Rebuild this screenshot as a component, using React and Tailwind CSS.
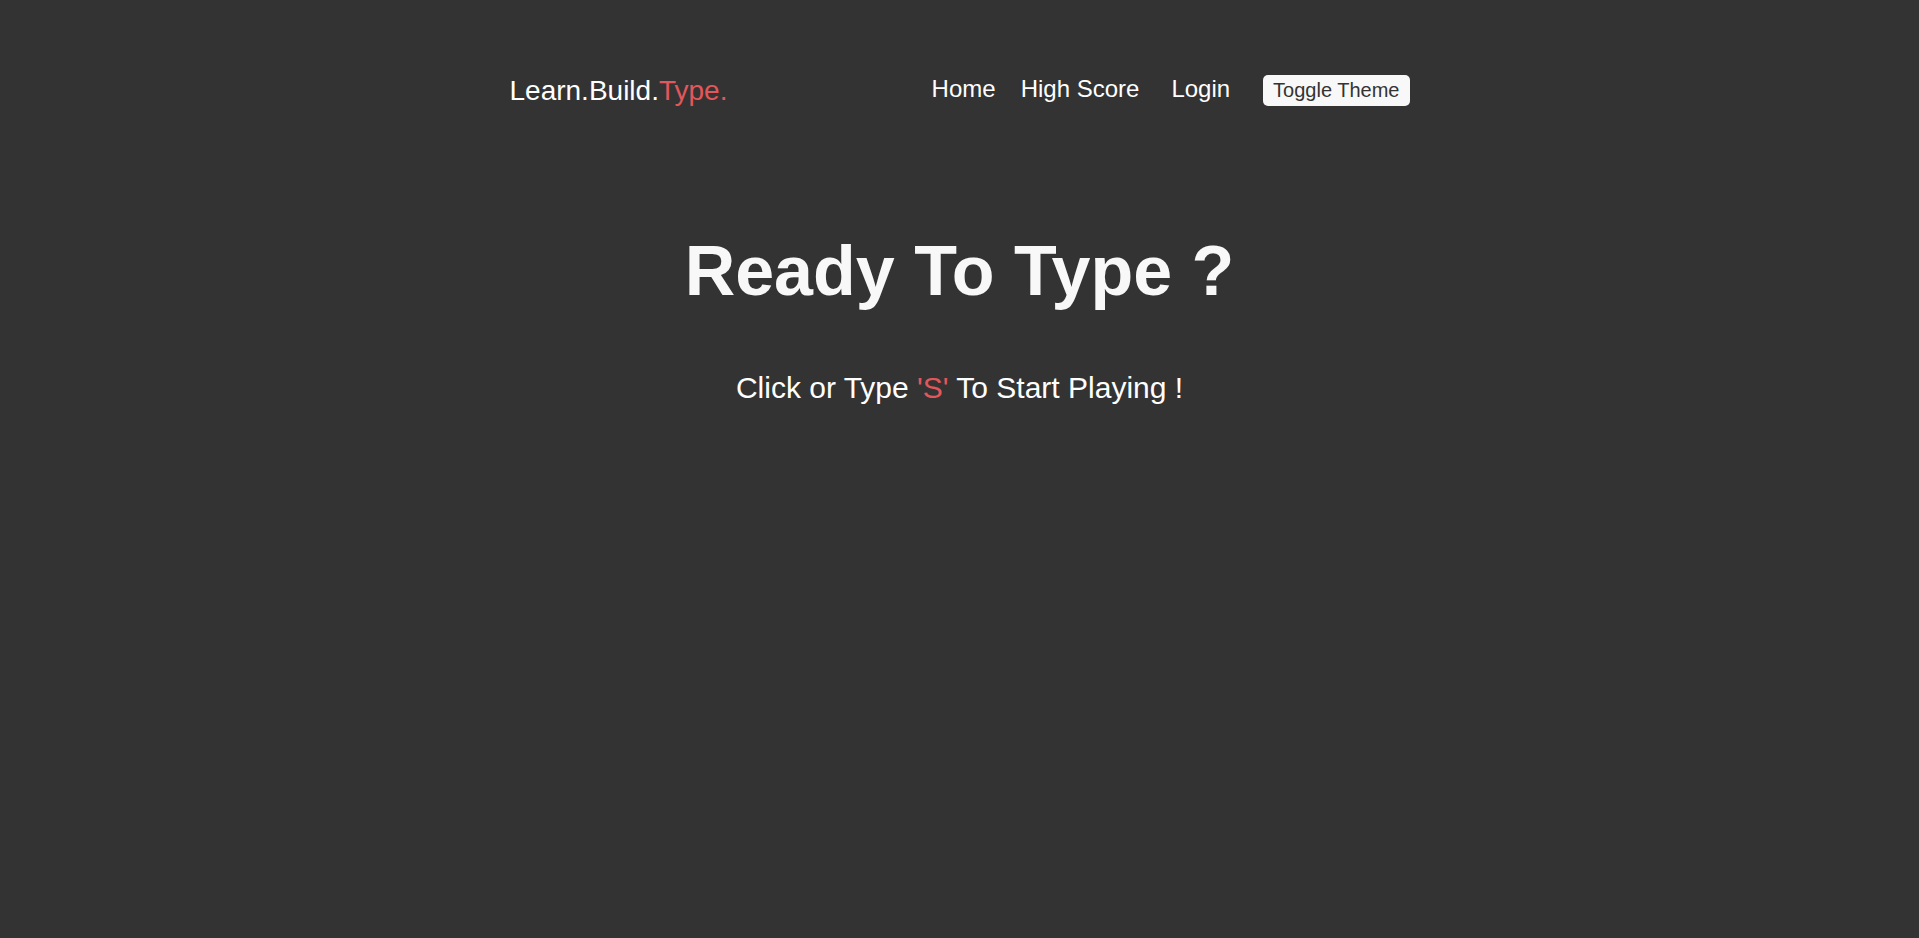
import React from 'react';

const App = () => {
    return (
        <div className="min-h-screen bg-[#333333] text-white font-['Liberation_Sans',Arial,sans-serif]">
            {/* Top nav */}
            <header className="w-[900px] mx-auto pt-[75px]">
                <div className="flex justify-between items-center h-[31px]">
                    <a href="#" className="text-[28px] leading-[32px] text-white">
                        Learn.Build.<span className="text-[#e2575b]">Type.</span>
                    </a>
                    <nav className="flex items-center">
                        <a href="#" className="text-[24px] leading-[28px] mb-[4px] text-white">Home</a>
                        <a href="#" className="text-[24px] leading-[28px] mb-[4px] ml-[25px] text-white">High Score</a>
                        <a href="#" className="text-[24px] leading-[28px] mb-[4px] ml-[32px] text-white">Login</a>
                        <button className="ml-[33px] bg-[#f8f8f8] text-[#333333] text-[20px] leading-[23px] px-[10px] py-1 rounded-[5px]">
                            Toggle Theme
                        </button>
                    </nav>
                </div>
            </header>

            {/* Start screen */}
            <main className="flex flex-col items-center text-center">
                <h1 className="mt-[130px] text-[70px] leading-none font-bold text-[#f8f8f8]">Ready To Type ?</h1>
                <p className="mt-[67px] text-[30px] leading-none text-white">
                    Click or Type <span className="text-[#e2575b]">'S'</span> To Start Playing !
                </p>
            </main>
        </div>
    );
};

export default App;
